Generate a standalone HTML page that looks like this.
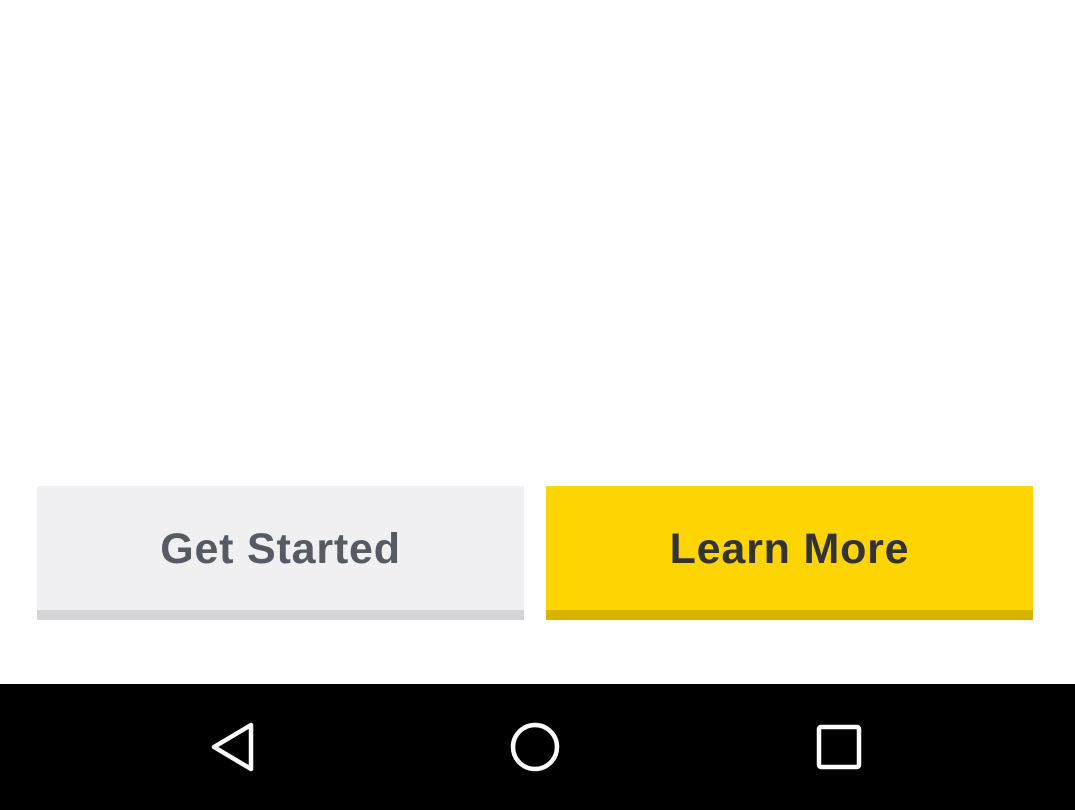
<html><head><style>
body{margin:0;width:1075px;height:810px;background:#fff;position:relative;overflow:hidden;font-family:"Liberation Sans",sans-serif}
.b{position:absolute;top:486px;width:487px;height:124px;display:flex;align-items:center;justify-content:center;font-size:43px;font-weight:bold;letter-spacing:0.8px;padding-top:3px;box-sizing:border-box;height:134px}
.g{left:37px;background:#f0f0f3;color:#555a63;border-bottom:10px solid #d4d4d7}
.y{left:546px;background:#fed500;color:#333333;border-bottom:10px solid #d7b200}
.nav{position:absolute;left:0;top:684px;width:1075px;height:126px;background:#000}
</style></head><body>
<div class="b g">Get Started</div>
<div class="b y">Learn More</div>
<div class="nav"><svg width="1075" height="126">
<path d="M251 41 L214 63 L251 85 Z" fill="none" stroke="#fff" stroke-width="4.5" stroke-linejoin="round"/>
<circle cx="535" cy="63" r="22" fill="none" stroke="#fff" stroke-width="4.5"/>
<rect x="819" y="43" width="40" height="40" rx="2" fill="none" stroke="#fff" stroke-width="4.5"/>
</svg></div>
</body></html>
